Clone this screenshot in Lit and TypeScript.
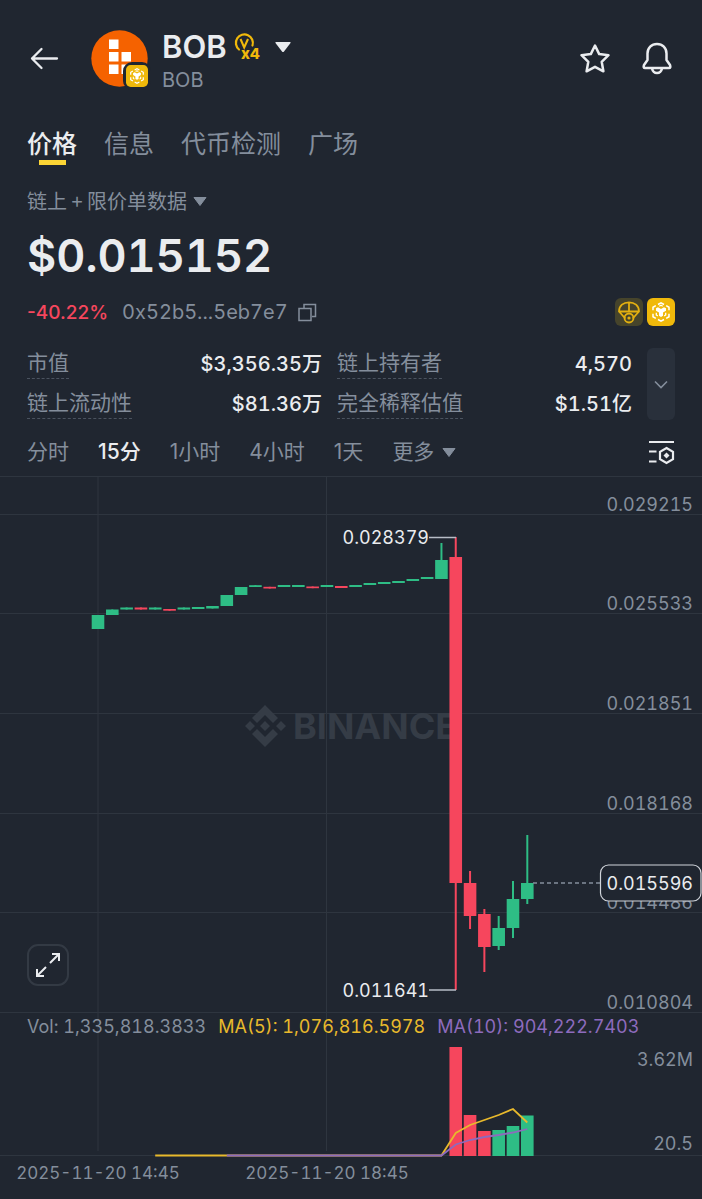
import { LitElement, html, svg, css } from "lit";
import { customElement, property, state } from "lit/decorators.js";

type Candle = { open: number; close: number; high: number; low: number };

const PITCH = 14.31;
const FIRST_X = 98;
const BODY = 12.6;
const VOLUME_BASE = 679;

// Vertical chart units, measured downwards from the top of the plot.
const c = (open: number, close: number, high = Math.min(open, close), low = Math.max(open, close)): Candle => ({
  open,
  close,
  high,
  low,
});

const candles: Candle[] = [
  c(152, 138), c(138, 132.5), c(132.5, 130.5), c(130.5, 132.5), c(132.5, 130.5),
  c(132, 133.7), c(132.5, 130.5), c(132, 130), c(131.5, 129), c(129, 118),
  c(118, 110), c(110, 108.2), c(109.8, 111.5), c(110, 108), c(110, 108),
  c(109.5, 111.2), c(110, 108), c(109, 111), c(110, 108), c(108, 106),
  c(107, 105), c(106, 104), c(104, 102), c(102, 100), c(102, 83, 66, 102),
  c(80, 406, 60, 513), c(406, 439, 394, 452), c(437, 470, 432, 495),
  c(469, 451, 439, 473), c(451, 422, 404, 461), c(422, 406, 358, 427),
];

const volumes: [number, number][] = [
  [25, 570], [26, 638], [27, 654], [28, 653], [29, 649], [30, 638.5],
];
const averageFive: [number, number][] = [
  [4, 678.5], [24, 678.5], [25, 656], [26, 648], [27, 643], [28, 638], [29, 632], [30, 645.5],
];
const averageTen: [number, number][] = [
  [9, 678.5], [24, 678.5], [25, 667.5], [26, 663], [27, 660], [28, 658], [29, 655.5], [30, 652],
];
const priceLines: [number, string][] = [
  [37.5, "0.029215"], [136.5, "0.025533"], [236.5, "0.021851"],
  [336.5, "0.018168"], [435.5, "0.014486"], [535.5, "0.010804"],
];

const xAt = (i: number) => FIRST_X + i * PITCH;
const points = (list: [number, number][]) => list.map(([i, y]) => `${xAt(i).toFixed(1)},${y}`).join(" ");

@customElement("chain-badge")
export class ChainBadge extends LitElement {
  static styles = css`
    :host { display: block; }
    svg { display: block; width: 100%; height: 100%; }
  `;
  render() {
    return html`<svg viewBox="0 0 28 28" aria-hidden="true">
      <rect width="28" height="28" rx="6" fill="#f0b90b" />
      <path fill="none" stroke="#fff" stroke-width="1.5" d="M11 6.500l3-1.700 3 1.700M19.200 7.700l2.800 1.600v3M22 15.700v3l-2.800 1.600M17 21.500l-3 1.700-3-1.700M8.800 20.300L6 18.700v-3M6 12.300v-3l2.800-1.600" />
      <path fill="#fff" d="M9 10.300l2-1.100 3 1.700 3-1.700 2 1.100v2.400l-3 1.800v3.200l-2 1.200-2-1.200v-3.200l-3-1.800z" />
      <path fill="none" stroke="#fff" stroke-width="1.300" d="M12.300 8.300L14 7.300l1.700 1M9.300 14.800v2.200l1.500.9M18.700 14.800v2.200l-1.500.9" />
    </svg>`;
  }
}

@customElement("stat-row")
export class StatRow extends LitElement {
  @property() label = "";
  @property() value = "";
  static styles = css`
    :host { display: flex; justify-content: space-between; align-items: flex-start; height: 32px; }
    .label { font-size: 21px; line-height: 30px; color: #848e9c; border-bottom: 1px dashed #4b535f; }
    .value { font-size: 20px; line-height: 32px; font-weight: 500; color: #eaecef; }
  `;
  render() {
    return html`<span class="label">${this.label}</span><span class="value">${this.value}</span>`;
  }
}

@customElement("price-chart")
export class PriceChart extends LitElement {
  static styles = css`
    :host { display: block; position: relative; border-top: 1px solid #2e353f; }
    .plot { display: block; width: 100%; height: auto; }
    .grid { stroke: #2e353f; stroke-width: 1; fill: none; }
    .up { fill: #2ebd85; stroke: #2ebd85; }
    .down { fill: #f6465d; stroke: #f6465d; }
    .body { stroke: none; }
    .wick { stroke-width: 2; }
    .axis { fill: #848e9c; font-size: 18px; }
    .date { fill: #848e9c; font-size: 17px; }
    .mark { fill: #eaecef; font-size: 18px; }
    .lead { stroke: #b7bdc6; stroke-width: 1.5; fill: none; }
    .dash { stroke: #848e9c; stroke-width: 1.3; stroke-dasharray: 4 3; }
    .tag { fill: #202630; stroke: #d0d4da; stroke-width: 1.2; }
    .water { fill: #353c46; }
    .brand { font-size: 36px; font-weight: 700; }
    .ma5 { stroke: #e8b92c; stroke-width: 1.8; fill: none; }
    .ma10 { stroke: #8d6bbd; stroke-width: 1.8; fill: none; }
    .legend { position: absolute; left: 27px; top: 74.5%; display: flex; gap: 12px; margin: 0; font-size: 18px; line-height: 24px; color: #848e9c; white-space: nowrap; }
    .five { color: #e8b92c; }
    .ten { color: #8d6bbd; }
    .expand { position: absolute; left: 27px; top: 64.7%; width: 42px; height: 42px; padding: 0; border: 2px solid #333a44; border-radius: 11px; background: #202630; display: grid; place-items: center; }
    .expand svg { width: 26px; height: 26px; }
  `;
  render() {
    return html`
      <svg class="plot" viewBox="0 0 702 722" role="img" aria-label="BOB 15分">
        ${priceLines.map(([y]) => svg`<path class="grid" d="M0 ${y}H702" />`)}
        <path class="grid" d="M0 678.5H702M98 0V674M326.500 0V674" />
        <g class="water">
          <path d="M265 228l13 13-5 5-8-8-8 8-5-5zM250 244l5 5-5 5-5-5zM265 244l5 5-5 5-5-5zM281 244l5 5-5 5-5-5zM265 270l-13-13 5-5 8 8 8-8 5 5z" />
          <text class="brand" x="293" y="262">BINANCE</text>
        </g>
        ${priceLines.map(([y, t]) => svg`<text class="axis" x="693" y=${y - 3.5} text-anchor="end">${t}</text>`)}
        ${candles.map((k, i) => {
          const x = xAt(i);
          const top = Math.min(k.open, k.close);
          return svg`<g class=${k.close < k.open ? "up" : "down"}>
            <path class="wick" d="M${x} ${k.high}V${k.low}" />
            <rect class="body" x=${x - BODY / 2} y=${top} width=${BODY} height=${Math.abs(k.open - k.close)} />
          </g>`;
        })}
        <path class="lead" d="M429 60.500H456M429 513H456" />
        <text class="mark" x="429" y="67" text-anchor="end">0.028379</text>
        <text class="mark" x="429" y="520" text-anchor="end">0.011641</text>
        <path class="dash" d="M533 406H600" />
        <rect class="tag" x="600.500" y="388" width="100.500" height="36" rx="8" />
        <text class="mark" x="693" y="413" text-anchor="end">0.015596</text>
        ${volumes.map(([i, y]) => {
          const k = candles[i];
          return svg`<rect class="body ${k.close < k.open ? "up" : "down"}" x=${xAt(i) - BODY / 2} y=${y} width=${BODY} height=${VOLUME_BASE - y} />`;
        })}
        <polyline class="ma5" points=${points(averageFive)} />
        <polyline class="ma10" points=${points(averageTen)} />
        <text class="axis" x="693" y="589" text-anchor="end">3.62M</text>
        <text class="axis" x="693" y="673" text-anchor="end">20.5</text>
        <text class="date" x="98" y="702" text-anchor="middle">2025-11-20 14:45</text>
        <text class="date" x="327" y="702" text-anchor="middle">2025-11-20 18:45</text>
      </svg>
      <p class="legend">
        <span>Vol: 1,335,818.3833</span><span class="five">MA(5): 1,076,816.5978</span><span class="ten">MA(10): 904,222.7403</span>
      </p>
      <button class="expand" aria-label="全屏">
        <svg viewBox="0 0 26 26" fill="none" stroke="#eaecef" stroke-width="2"><path d="M15 11l8.500-8.500M17 2h7v7M11 15l-8.500 8.500M9 24H2v-7" /></svg>
      </button>
    `;
  }
}

@customElement("app-root")
export class AppRoot extends LitElement {
  @state() private tab = "价格";
  @state() private interval = "15分";

  static styles = css`
    :host { display: block; min-height: 100vh; background: #202630; color: #eaecef; font-family: Inter, "Noto Sans CJK SC", sans-serif; font-variant-numeric: tabular-nums; }
    button { font: inherit; color: inherit; background: none; border: 0; padding: 0; margin: 0; cursor: pointer; }
    svg { display: block; }
    .head { display: flex; align-items: center; padding: 28px 29px 0 28px; height: 60px; }
    .back { margin-right: 31px; }
    .token { position: relative; width: 57px; height: 57px; margin-right: 14px; }
    .chain { position: absolute; right: -3px; bottom: -3px; width: 22px; height: 22px; border: 3px solid #202630; border-radius: 9px; background: #202630; }
    .names { flex: 1; padding-top: 8px; }
    .title { display: flex; align-items: center; gap: 7px; height: 35px; }
    h1 { margin: 0; font-size: 31px; line-height: 34px; font-weight: 600; }
    .caret { margin-left: 6px; }
    .sub { margin: 0; font-size: 20px; line-height: 30px; color: #848e9c; }
    .actions { display: flex; gap: 30px; }
    .tabs { display: flex; gap: 27px; padding: 40px 27px 0; }
    .tab { display: flex; flex-direction: column; align-items: center; font-size: 25px; line-height: 32px; color: #848e9c; }
    .tab::after { content: ""; width: 27px; height: 5px; }
    .tab.on { color: #eaecef; font-weight: 500; }
    .tab.on::after { background: #fcd535; }
    .source { display: flex; align-items: center; gap: 6px; margin: 21px 27px 0; font-family: "Noto Sans CJK SC", sans-serif; font-size: 20px; line-height: 30px; color: #848e9c; }
    .price { margin: 10px 27px 0; font-size: 45px; line-height: 60px; font-weight: 600; }
    .meta { display: flex; align-items: center; padding: 11px 27px 0; height: 30px; font-size: 20px; }
    .change { font-size: 19px; color: #f6465d; font-weight: 500; font-variant-numeric: normal; margin-right: 14px; }
    .address { color: #848e9c; margin-right: 10px; }
    .badges { display: flex; gap: 4px; margin-left: auto; }
    .badge { width: 28px; height: 28px; }
    .stats { display: grid; grid-template-columns: 1fr 1fr 28px; column-gap: 15px; padding: 21px 27px 0; }
    .pair { display: grid; row-gap: 7px; }
    .more { background: #29303b; border-radius: 6px; display: grid; place-items: center; height: 72px; }
    .intervals { display: flex; align-items: center; gap: 29px; padding: 13px 27px 5px; font-size: 21px; line-height: 38px; font-variant-numeric: normal; color: #848e9c; }
    .intervals .on { color: #eaecef; font-weight: 500; }
    .others { display: flex; align-items: center; gap: 8px; }
    .tune { margin-left: auto; }
  `;

  render() {
    return html`
      <header class="head">
        <button class="back" aria-label="返回">
          <svg width="32" height="24" viewBox="0 0 32 24" fill="none" stroke="#eaecef" stroke-width="2.300" stroke-linecap="round" stroke-linejoin="round"><path d="M29 12.500H4M13.500 3 4 12.500l9.500 9.500" /></svg>
        </button>
        <div class="token">
          <svg width="57" height="57" viewBox="0 0 57 57">
            <circle cx="28.500" cy="28.500" r="28.200" fill="#f56200" />
            <path fill="#fff" d="M18 9.500h9.500V19H18zM18 22h9.500v9.500H18zM18 34.500h9.500V44H18zM30.500 22H40v9.500h-9.500zM30.500 34.500H40V44h-9.500z" />
          </svg>
          <chain-badge class="chain"></chain-badge>
        </div>
        <div class="names">
          <div class="title">
            <h1>BOB</h1>
            <svg width="27" height="30" viewBox="0 0 27 30" fill="none" stroke="#f0b90b">
              <path d="M5 17.500a8.500 8.500 0 1 1 13.500-4" stroke-width="2.200" stroke-linecap="round" />
              <path d="M6.500 7l3.700 8.500L14 7" stroke-width="2.100" />
              <text x="7" y="27" font-size="15" font-weight="800" fill="#f0b90b" stroke="none">x4</text>
            </svg>
            <button class="caret" aria-label="切换代币"><svg width="18" height="12" viewBox="0 0 18 12"><path d="M2 1h14q1 0 .5 1L10 10.500q-1 1-2 0L1.500 2Q1 1 2 1z" fill="#eaecef" /></svg></button>
          </div>
          <p class="sub">BOB</p>
        </div>
        <div class="actions">
          <button aria-label="收藏"><svg width="32" height="32" viewBox="0 0 32 32" fill="none" stroke="#eaecef" stroke-width="2.500" stroke-linejoin="round"><path d="M16 3.500l4.200 8.600 9.300 1.100-6.800 6.600 1.700 9.500L16 24.800l-8.400 4.500 1.700-9.500-6.800-6.600 9.300-1.100z" /></svg></button>
          <button aria-label="提醒"><svg width="32" height="34" viewBox="0 0 32 34" fill="none" stroke="#eaecef" stroke-width="2.500" stroke-linejoin="round"><path d="M16 3C10.500 3 6.500 7 6.500 12.500V19L3 24q-1 3 1 3h24q2 0 1-3l-3.500-5v-6.500C25.500 7 21.500 3 16 3zM11 27.500q1 4.500 5 4.500t5-4.500" /></svg></button>
        </div>
      </header>

      <nav class="tabs">
        ${["价格", "信息", "代币检测", "广场"].map(
          (t) => html`<button class="tab ${t === this.tab ? "on" : ""}" @click=${() => (this.tab = t)}>${t}</button>`
        )}
      </nav>

      <button class="source">链上 + 限价单数据 <svg width="14" height="9" viewBox="0 0 14 9"><path d="M1 .5h12L7 8.500z" fill="#848e9c" stroke="#848e9c" stroke-linejoin="round" /></svg></button>
      <p class="price">$0.015152</p>
      <div class="meta">
        <span class="change">-40.22%</span>
        <span class="address">0x52b5...5eb7e7</span>
        <button aria-label="复制"><svg width="19" height="19" viewBox="0 0 19 19" fill="none" stroke="#848e9c" stroke-width="1.500"><path d="M1 5.500h12v12H1zM6 5V1.500h11.500v12H14" /></svg></button>
        <div class="badges">
          <svg class="badge" viewBox="0 0 28 28">
            <rect width="28" height="28" rx="6" fill="#46442b" />
            <g fill="none" stroke="#e3b010" stroke-width="1.800" stroke-linejoin="round">
              <path d="M4 13.500C4 7.500 8.500 4.300 14 4.300s10 3.200 10 9.200zM14 4.300v9.200M4 13.500l6.300 7M24 13.500l-6.300 7" /><circle cx="14" cy="20" r="4.500" />
            </g><circle cx="14" cy="20" r="1.600" fill="#e3b010" />
          </svg>
          <chain-badge class="badge"></chain-badge>
        </div>
      </div>

      <section class="stats">
        <div class="pair">
          <stat-row label="市值" value="$3,356.35万"></stat-row>
          <stat-row label="链上流动性" value="$81.36万"></stat-row>
        </div>
        <div class="pair">
          <stat-row label="链上持有者" value="4,570"></stat-row>
          <stat-row label="完全稀释估值" value="$1.51亿"></stat-row>
        </div>
        <button class="more" aria-label="展开"><svg width="14" height="9" viewBox="0 0 14 9" fill="none" stroke="#848e9c" stroke-width="1.600"><path d="M1 1.500l6 6 6-6" /></svg></button>
      </section>

      <nav class="intervals">
        ${["分时", "15分", "1小时", "4小时", "1天"].map(
          (t) => html`<button class=${t === this.interval ? "on" : ""} @click=${() => (this.interval = t)}>${t}</button>`
        )}
        <button class="others">更多 <svg width="14" height="9" viewBox="0 0 14 9"><path d="M1 .5h12L7 8.500z" fill="#848e9c" stroke="#848e9c" stroke-linejoin="round" /></svg></button>
        <button class="tune" aria-label="图表设置">
          <svg width="27" height="25" viewBox="0 0 27 25" fill="none" stroke="#eaecef" stroke-width="2.200"><path d="M1 2h25M1 11.500h7.500M1 21.500h7.500M18.500 8l6.500 3.800v7.400l-6.500 3.800-6.500-3.800v-7.400z" /><path d="M18.500 12.500l3 3-3 3-3-3z" fill="#eaecef" stroke="none" /></svg>
        </button>
      </nav>
      <price-chart></price-chart>
    `;
  }
}
